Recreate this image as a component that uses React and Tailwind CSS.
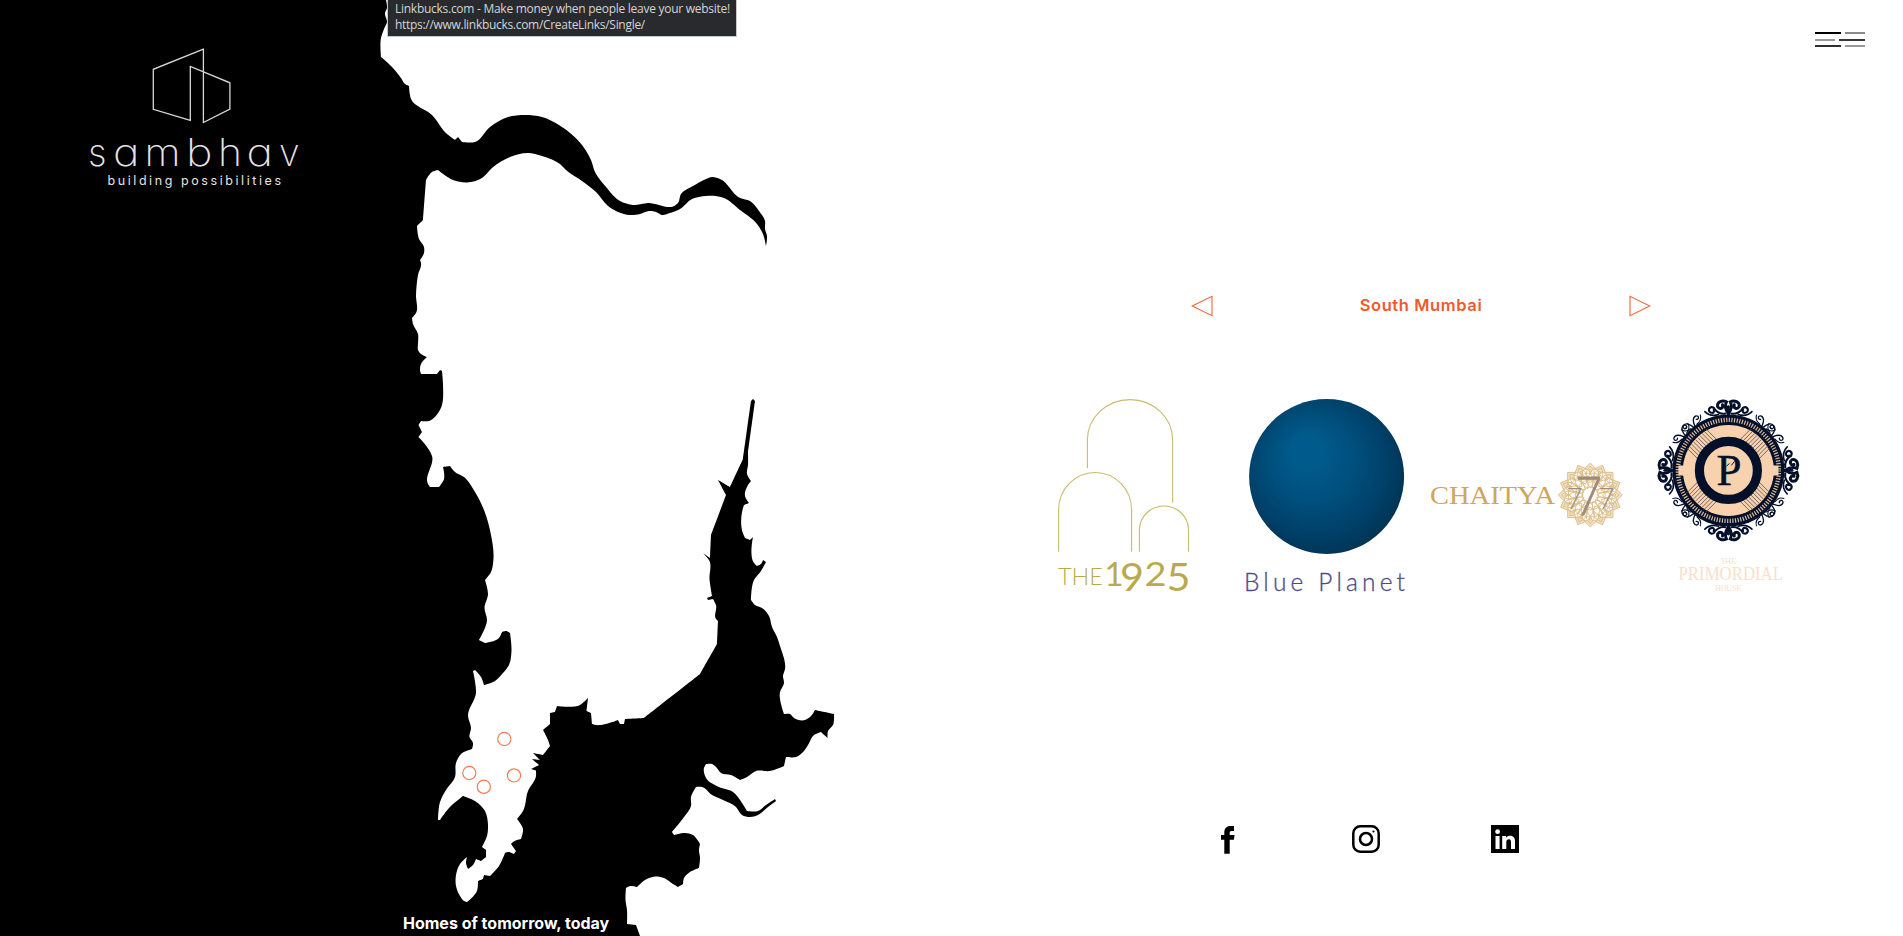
import React from "react";

const COAST = `386,0 387,8 385,13 387,22 384,29 381,38 381,57 391,66 401,78 405,84 409,86 411,99 432,115 447,134 455,140 458,137 462,142 475,142 490,127 508,117 525,115 542,117 562,127 582,145 591,160 595,172 606,187 620,201 633,205 648,203 675,205.5 678,203 681,194 693,186 706,179 712,177 720,179 740,198 750,201 759,211 765,221 765,229 767,236 766,246 763,234 757,224 740,210 724,198 706,196 692,199 680,209 670,213 662,215 656,212 649,211 640,214 630,215 618,212 608,206 597,193 582,181 566,170 560,164 542,156 528,153 510,157 492,168 482,178 467,182.5 453,180 438,170 432,172 426,180 423,220 417,226 419,239 424,247 424,253 420,260 421,263 418,275 416,295 416,313 412,318 413,324 418,334 418,344 418,350 421,354 427,357 421,364 420,370 421,374 437,374 440,370 442,371 443,384 440,410 429,421 421,421 418.5,425 422,432 418.5,437 424,443 432,456 428,484 430,487 439,487 444,479 444,472 443,467 450,466 455,472 464,477 475,492 484,510 491,535 493.5,558 491,572 485,580 488,594 484.5,608 487,620 479,640 485,643 499,638 502,632 506,631 510,633 511.5,650 509,665 503,673 495,681 484,685 481,677 475,670 473,671 476,693 468,716 471,728 469.5,737 473,743 472,749 461,754 456,763 455,777 446,790 440,802 438,820 440,820 449,808 463,796 475,801 485,811 488,825 487,836 482,847 486,850 486,857 481,861 476,859 473,865 468,869 466,863 467,857 460,864 456,875 456,886 460,896 464,901 467,902 477,891 478,881 483,879 484,875 490,876 499,866 505,853 508,852 514,854 516,851 511,844 513,842 521,839 523,829 517,819 523,811 528,791 536,776 536,770.5 531,769 539,765 532,759 540,760 533,753 543,755 550,746 548,740 543,730 550,724 550,713 555,712 557,706 580,705 588,698 586.5,711 591,713 592,724 596,725 618,720 620,724 624,724 625,719 644,718 700,674 717,644 718,621 716,619 716,605 713,599 708,600 707,598 712,596 709.5,579 709.5,561 703,553 710,558 711,535 726,495 718,480 730,487 743,459 751,401 753,399 755,401 748,452 748,465 747,474 751,481 748,485 745,496 749,503 744,505 742.5,510 742.5,532 745,538 750,540 753,537 754,563 757,566 761,564 763,560 766,562 761,571 754,580 751,600 755,605 762,608 769,616 772,627 777,637 780,646 785,669 783,676 784,683 780,692 784,714 790,714 794,718 805,720 811,716 815,710 834,714 833,725 828,731 827.5,738 821,732 814,735 808,745 804,751 796,757 786,757 784,766 770,771 756,771 747,777 740,780 731,775 721,773 716,767 712,764 706,764 704,768 706,778 719,787 733,792 742,803 747,811 758,811 766,805 775,799 776,801 768,807 758,815 750,817 742,815 736,807 723,800 712,795 702,787 696,787 691,797 691,806 684,817 672,832 674,835 685,833 693,835 700,844 699,850 700,858 699,868 690,872 684,878 683,884 678,887 673,884 664,878 655,876.5 645,880 637,887 630,886 626,888 625.5,900 627,910 627,924 636,925 640,936 0,936 0,0`;

// Smooths gentle bends between points and keeps sharp turns as corners.
function coastPath(src) {
  const p = src.split(" ").map((s) => s.split(",").map(Number));
  const n = p.length;
  const tangent = p.map((c, i) => {
    const a = p[(i + n - 1) % n];
    const b = p[(i + 1) % n];
    const u = [c[0] - a[0], c[1] - a[1]];
    const v = [b[0] - c[0], b[1] - c[1]];
    const lu = Math.hypot(...u);
    const lv = Math.hypot(...v);
    const cos = (u[0] * v[0] + u[1] * v[1]) / (lu * lv);
    if (cos < 0.7 || Math.max(lu, lv) > 34) return [0, 0];
    const t = [u[0] / lu ** 2 + v[0] / lv ** 2, u[1] / lu ** 2 + v[1] / lv ** 2];
    const l = Math.hypot(...t);
    return [t[0] / l, t[1] / l];
  });
  let d = `M${p[0]}`;
  for (let i = 0; i < n - 1; i++) {
    const k = Math.hypot(p[i + 1][0] - p[i][0], p[i + 1][1] - p[i][1]) / 3.2;
    const [s, e] = [tangent[i], tangent[i + 1]];
    d += `C${p[i][0] + s[0] * k},${p[i][1] + s[1] * k} ${p[i + 1][0] - e[0] * k},${p[i + 1][1] - e[1] * k} ${p[i + 1]}`;
  }
  return d + "Z";
}

const PINS = [[504.3, 739], [469.3, 773], [483.8, 786.8], [514, 775.4]];

function MumbaiMap() {
  return (
    <svg className="block h-[936px] w-[860px] [grid-area:1/1]" viewBox="0 0 860 936">
      <path d={coastPath(COAST)} />
      {PINS.map(([x, y]) => (
        <circle key={x} cx={x} cy={y} r="6.6" fill="none" stroke="#f47c57" strokeWidth="1.2" />
      ))}
    </svg>
  );
}

const WORDMARK = [["s", 88, 18.5], ["a", 113, 26.5], ["m", 144.5, 36], ["b", 186, 26.5], ["h", 218, 24], ["a", 246.5, 26.5], ["v", 279, 20.5]];

function SambhavLogo() {
  return (
    <svg className="h-[150px] w-[240px]" viewBox="80 40 240 150" fill="none">
      <path d="M203.4 49.2 153.3 69.3V109.3L190.3 120.3V66.5L229.9 82.8V109L203.4 122.5Z" stroke="#d8d8d8" strokeWidth="1.3" />
      <g fill="#e4e4e4" className="font-['Inter',sans-serif] [font-feature-settings:'cv11']">
        {WORDMARK.map(([letter, x, w]) => (
          <text key={x} x={x} y="165.500" fontSize="38.500" fontWeight="200" textLength={w} lengthAdjust="spacingAndGlyphs">{letter}</text>
        ))}
        <text x="107.500" y="184.500" fontSize="12.500" fontWeight="400" textLength="173.500">building possibilities</text>
      </g>
    </svg>
  );
}

function The1925() {
  return (
    <svg className="h-[192px] w-[132px] overflow-visible" viewBox="1058 399 132 192" fill="none">
      <g stroke="#c9bb6c" strokeWidth="1.1">
        <path d="M1087.400 468.300V440A42.600 40.400 0 0 1 1172.600 440V502.700" />
        <path d="M1058.600 551.700V510A36.500 37.500 0 0 1 1131.600 510V551.700" />
        <path d="M1139.400 551.700V530A24.500 24 0 0 1 1188.500 530V551.700" />
      </g>
      <g fill="#baa94d" className="font-['Lato',sans-serif]">
        <text x="1058" y="584.800" fontSize="24" fontWeight="300" textLength="45" lengthAdjust="spacingAndGlyphs">THE</text>
        <text x="1104.500" y="586" fontSize="33" textLength="19" lengthAdjust="spacingAndGlyphs">1</text>
        <text x="1120" y="590.500" fontSize="39" textLength="24" lengthAdjust="spacingAndGlyphs">9</text>
        <text x="1144.500" y="586" fontSize="33" textLength="22" lengthAdjust="spacingAndGlyphs">2</text>
        <text x="1166.500" y="590.500" fontSize="39" textLength="24" lengthAdjust="spacingAndGlyphs">5</text>
      </g>
    </svg>
  );
}

function BluePlanet() {
  return (
    <svg className="ml-[56px] h-[192px] w-[160px] overflow-visible" viewBox="1246 399 160 192">
      <defs>
        <radialGradient id="planet" gradientUnits="userSpaceOnUse" cx="1320" cy="469" r="86" fx="1304" fy="448">
          <stop offset="0" stopColor="#005b8e" />
          <stop offset=".2" stopColor="#005a8b" />
          <stop offset=".5" stopColor="#004f7c" />
          <stop offset=".8" stopColor="#00416a" />
          <stop offset="1" stopColor="#003556" />
        </radialGradient>
      </defs>
      <circle cx="1326.600" cy="476.500" r="77.500" fill="url(#planet)" />
      <text x="1244" y="590.800" fontSize="24.500" fontWeight="300" textLength="161" fill="#4f4a87" stroke="#4f4a87" strokeWidth=".3" className="font-['Lato',sans-serif]">Blue Planet</text>
    </svg>
  );
}

const around = (n, offset = 0) => Array.from({ length: n }, (_, i) => offset + (i * 360) / n);

function Chaitya() {
  return (
    <svg className="ml-[24px] h-[192px] w-[194px] overflow-visible" viewBox="1430 399 194 192">
      <text x="1430" y="504.200" fontSize="25" textLength="125" lengthAdjust="spacingAndGlyphs" fill="#cfa65c" className="font-['Liberation_Serif',serif]">CHAITYA</text>
      <g fill="none" stroke="#dcbc85" strokeWidth=".9">
        {around(16).map((a) => (
          <g key={a} transform={`translate(1590.300 495) rotate(${a})`}>
            <path d="M0-32Q-3-29-6-26 0-26 0-20 0-26 6-26 3-29 0-32Z" fill="#f1e2c6" />
            <path d="M0-29Q-9-20 0-12 9-20 0-29Z" />
            <path d="M0-22Q-6-14 0-7 6-14 0-22Z" />
            <circle cx="0" cy="-24" r="1.300" />
          </g>
        ))}
        {[8, 15, 22].map((r) => <circle key={r} cx="1590.300" cy="495" r={r} />)}
      </g>
      <g fill="#a18a79" className="font-['Lato',sans-serif]" fontWeight="300">
        <text x="1566.500" y="508.500" fontSize="30" textLength="16" lengthAdjust="spacingAndGlyphs">7</text>
        <text x="1575" y="514.500" fontSize="54" fontWeight="300" stroke="#a18a79" strokeWidth=".8" textLength="27" lengthAdjust="spacingAndGlyphs">7</text>
        <text x="1598.500" y="508.500" fontSize="30" textLength="16" lengthAdjust="spacingAndGlyphs">7</text>
      </g>
    </svg>
  );
}

function Scroll({ turn, scale }) {
  return (
    <g transform={`rotate(${turn}) scale(${scale})`}>
      {[1, -1].map((s) => (
        <g key={s} transform={`scale(${s} 1)`}>
          <path d="M0-58C3-62 4-66 2-70C6-72 12-70 11-65C9-62 5-63 6-67" strokeWidth="3" />
          <path d="M3-58C8-57 13-60 15-64C19-66 22-61 18-59C15-58 14-60 15-62" strokeWidth="2.200" />
          <path d="M10-57C16-55 20-56 24-60" strokeWidth="1.700" />
        </g>
      ))}
      <path d="M0-56V-65" strokeWidth="3" />
    </g>
  );
}

function Primordial() {
  return (
    <svg className="ml-[35px] h-[192px] w-[140px] overflow-visible" viewBox="1659 399 140 192">
      <g transform="translate(1728.400 470.400)">
        <g fill="none" stroke="#04102a" strokeLinecap="round">
          {around(4).map((a) => <Scroll key={a} turn={a} scale={0.98} />)}
          {[38, 52, 128, 142, 218, 232, 308, 322].map((a) => (
            <g key={a} transform={`rotate(${a})`}>
              {[1, -1].map((s) => (
                <g key={s} transform={`scale(${s} 1)`}>
                  <path d="M1-56C2-60 4-64 8-63C11-61 8-58 6-60" strokeWidth="1.300" />
                  <path d="M4-56C8-56 11-58 12-61" strokeWidth="1.100" />
                </g>
              ))}
            </g>
          ))}
        </g>
        <circle r="56" fill="#04102a" />
        <circle r="50.500" fill="none" stroke="#d9b999" strokeWidth="4.400" strokeDasharray="1.200 1.444" />
        <circle r="45.500" fill="#f8d2ae" />
        <path d="M-50-5H-44V5H-50ZM44-5H50V5H44Z" fill="#f8d2ae" />
        <g stroke="#5d5352" strokeWidth=".8">
          {[45, 135, 225, 315].map((a) => (
            <g key={a} transform={`rotate(${a})`}>
              {[-13.5, -10.5, -7.5, -4.5, -1.5, 1.5, 4.5, 7.5, 10.5, 13.5].map((x) => <path key={x} d={`M${x}-30V-45`} />)}
            </g>
          ))}
        </g>
        <circle r="29" fill="#f8d2ae" stroke="#04102a" strokeWidth="9.200" />
        <text x="-12" y="14.200" fontSize="44" textLength="25" lengthAdjust="spacingAndGlyphs" fill="#04102a" stroke="#04102a" strokeWidth=".5" className="font-['Liberation_Serif',serif]">P</text>
        <path d="M-2-4 1-7M3-5 6-9" stroke="#04102a" strokeWidth="1" fill="none" />
      </g>
      <g fill="#fae0c9" className="font-['Liberation_Serif',serif]">
        <text x="1720.500" y="564.300" fontSize="9" textLength="15.500" lengthAdjust="spacingAndGlyphs">THE</text>
        <text x="1678.500" y="580" fontSize="18.500" textLength="104.500" lengthAdjust="spacingAndGlyphs">PRIMORDIAL</text>
        <text x="1715.300" y="590.500" fontSize="8.500" textLength="26" lengthAdjust="spacingAndGlyphs">HOUSE</text>
      </g>
    </svg>
  );
}

function Triangle({ flip }) {
  return (
    <svg className={flip ? "h-[22px] w-[22px] rotate-180" : "h-[22px] w-[22px]"} viewBox="0 0 22 22" fill="none">
      <path d="M1.200 11 21 1.300V20.700Z" stroke="#f26535" strokeWidth="1.100" />
    </svg>
  );
}

function MenuIcon() {
  return (
    <div className="flex h-[15px] w-[50px] flex-col justify-between">
      <div className="flex justify-between">
        <span className="h-[2px] w-[26px] bg-black" />
        <span className="h-[2px] w-[20px] bg-[#8c8c8c]" />
      </div>
      <div className="flex justify-between">
        <span className="h-[2px] w-[20px] bg-[#999]" />
        <span className="h-[2px] w-[26px] bg-[#383838]" />
      </div>
      <div className="flex justify-between">
        <span className="h-[2px] w-[26px] bg-[#303030]" />
        <span className="h-[2px] w-[20px] bg-[#999]" />
      </div>
    </div>
  );
}

export default function App() {
  return (
    <main className="relative grid h-[936px] w-full grid-cols-[860px_1fr] overflow-hidden bg-white font-['Inter',sans-serif]">
      <section className="grid h-[936px] grid-cols-[860px] grid-rows-[936px]">
        <MumbaiMap />
        <div className="z-10 flex flex-col justify-between [grid-area:1/1]">
          <div className="pl-[80px] pt-[40px]"><SambhavLogo /></div>
          <p className="pb-[3px] pl-[403px] text-[16px] font-bold leading-[20px] text-white">Homes of tomorrow, today</p>
        </div>
      </section>

      <section className="flex flex-col">
        <header className="flex h-[295px] items-start justify-end pr-[38px] pt-[32px]"><MenuIcon /></header>
        <nav className="ml-[331px] flex h-[22px] w-[460px] items-center justify-between">
          <Triangle />
          <h2 className="pb-[2px] text-[16.5px] font-semibold leading-[20px] tracking-[0.6px] text-[#f15a29]">South Mumbai</h2>
          <Triangle flip />
        </nav>
        <div className="ml-[198px] mt-[82px] flex">
          <The1925 />
          <BluePlanet />
          <Chaitya />
          <Primordial />
        </div>
        <footer className="ml-[361px] mt-[234px] flex h-[29px]">
          <svg className="h-[29px] w-[14px]" viewBox="0 0 14 29">
            <path d="M3.300 28.700V14.700H0V10H3.300V7.500C3.300 3.300 5.600 1 9.500 1H13V6H10.500C9 6 8.700 6.800 8.700 8V10H13.500L12.900 14.700H8.700V28.700Z" />
          </svg>
          <svg className="ml-[117px] h-[28px] w-[28px]" viewBox="0 0 28 28" fill="none" stroke="#000">
            <rect x="1.300" y="1.300" width="25.400" height="25.400" rx="7" strokeWidth="2.500" />
            <circle cx="14" cy="14" r="6" strokeWidth="2.500" />
            <circle cx="21.500" cy="6.500" r="1.100" fill="#000" stroke="none" />
          </svg>
          <svg className="ml-[111px] h-[28px] w-[28px]" viewBox="0 0 28 28">
            <path d="M0 0H28V28H0Z" />
            <g fill="#fff">
              <circle cx="6.600" cy="6.700" r="2.400" />
              <path d="M4.500 11H8.600V24H4.500ZM11.200 11H15V12.800C16 11.200 17.500 10.700 19 10.700 22.800 10.700 24 13.200 24 16.500V24H20V17.500C20 15.500 19.700 14.200 17.900 14.200 15.900 14.200 15.300 15.500 15.300 17.500V24H11.200Z" />
            </g>
          </svg>
        </footer>
      </section>

      <div className="absolute left-[387px] top-0 z-20 h-[37px] w-[350px] whitespace-nowrap border border-t-0 border-[#c8cacd] bg-[#292a2d] pl-[7px] pt-px font-['Open_Sans',sans-serif] text-[12px] leading-[16px] text-[#d3d5d8]">
        <p className="tracking-[-0.27px]">Linkbucks.com - Make money when people leave your website!</p>
        <p className="tracking-[-0.3px]">https://www.linkbucks.com/CreateLinks/Single/</p>
      </div>
    </main>
  );
}
